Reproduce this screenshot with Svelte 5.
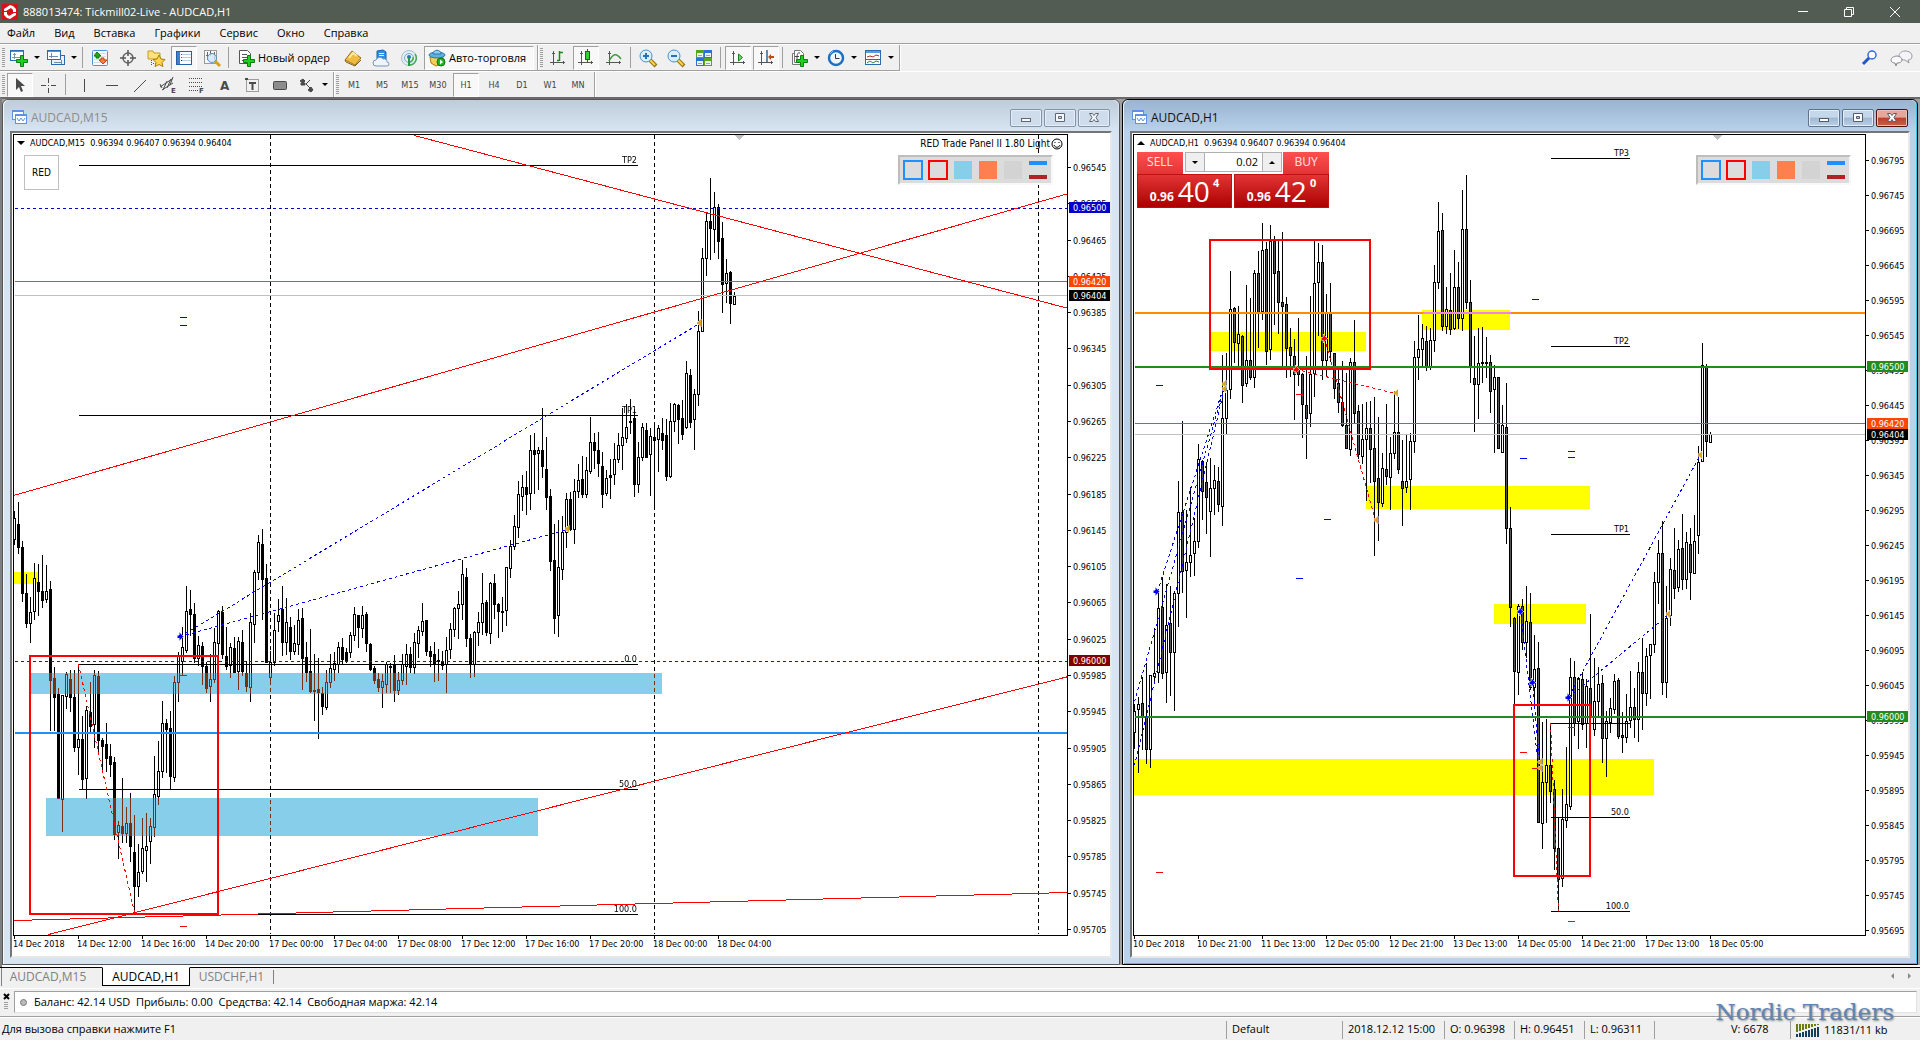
<script>
  const menu = ['Файл', 'Вид', 'Вставка', 'Графики', 'Сервис', 'Окно', 'Справка'];
  const periods = ['M1', 'M5', 'M15', 'M30', 'H1', 'H4', 'D1', 'W1', 'MN'];
  const tabs = ['AUDCAD,M15', 'AUDCAD,H1', 'USDCHF,H1'];
  const drawTools = ['vline', 'hline', 'trend', 'channel', 'fibo', 'text', 'label', 'rect'];

  let period = $state('H1');
  let tab = $state('AUDCAD,H1');
  let volume = $state('0.02');

  // candle: [high, body top, body bottom, low, bearish]
  const m15 = [
    [511,518,539,544,0],[502,524,547,553,1],[541,547,593,601,1],[574,593,623,627,1],[597,612,623,642,0],[563,578,611,619,0],
    [564,582,591,615,1],[555,591,600,607,1],[565,591,599,602,0],[581,589,680,730,1],[667,678,697,730,1],[688,694,798,798,1],
    [695,695,799,831,0],[672,674,696,708,0],[670,679,697,711,1],[670,697,747,751,1],[665,739,747,774,0],[716,739,779,789,1],
    [706,710,778,798,0],[682,712,726,732,1],[670,675,724,747,0],[671,676,740,754,1],[738,740,746,769,1],[723,744,758,771,1],
    [744,756,764,776,1],[757,762,834,839,1],[821,825,832,858,0],[778,826,833,842,1],[807,823,833,842,0],[793,823,846,861,1],
    [815,852,886,913,1],[844,872,886,896,0],[818,848,871,873,0],[813,846,850,881,0],[818,826,841,863,0],[756,794,827,836,0],
    [741,771,796,804,0],[701,723,771,777,0],[719,723,729,772,1],[711,728,776,789,1],[676,682,777,781,0],[652,656,682,701,0],
    [627,647,661,674,0],[586,611,650,652,0],[590,609,614,635,1],[603,614,658,662,1],[636,645,658,665,0],[642,646,666,684,1],
    [662,666,688,692,1],[654,679,686,701,0],[628,642,679,682,0],[610,611,643,654,0],[606,612,654,658,1],[627,656,666,669,1],
    [643,647,665,677,0],[637,648,672,672,1],[637,641,671,689,0],[630,642,671,675,1],[661,673,686,691,1],[613,622,687,701,0],
    [570,572,624,642,0],[535,542,572,579,0],[529,544,579,619,1],[564,578,662,662,1],[651,662,677,684,0],[613,630,662,665,0],
    [599,615,621,631,0],[586,609,642,655,1],[598,622,642,654,0],[617,627,651,659,1],[625,643,651,654,0],[609,620,644,654,0],
    [608,618,658,689,1],[642,657,672,681,1],[629,671,691,692,1],[654,690,691,720,1],[658,689,692,738,1],[687,693,706,714,1],
    [670,682,707,709,0],[654,668,682,687,0],[652,663,669,680,0],[642,647,664,672,0],[638,647,659,664,1],[648,652,660,662,1],
    [632,635,652,657,0],[607,614,635,640,0],[615,615,627,647,1],[606,615,628,637,0],[612,614,643,651,1],[643,644,669,670,1],
    [666,668,680,683,1],[673,679,687,691,1],[674,681,687,707,0],[662,664,684,692,0],[663,666,667,692,1],[655,664,690,701,1],
    [672,680,690,694,0],[654,664,680,684,0],[644,654,666,684,0],[647,654,667,672,1],[633,642,667,673,0],[626,630,643,657,0],
    [603,621,631,635,0],[620,620,651,655,1],[646,651,656,666,1],[642,654,664,681,1],[649,660,661,680,1],[651,661,665,669,1],
    [637,650,664,692,0],[623,629,649,658,0],[607,608,629,636,0],[591,604,608,638,0],[560,574,604,619,0],[568,577,638,646,1],
    [634,638,663,677,1],[631,632,664,676,0],[612,622,632,645,0],[573,603,622,634,0],[600,602,632,635,1],[582,583,633,643,0],
    [574,583,604,618,1],[603,604,611,637,1],[597,611,612,631,1],[567,567,610,625,0],[540,546,568,577,0],[515,526,546,549,0],
    [481,494,527,537,0],[475,487,496,510,0],[471,487,494,514,1],[435,450,493,509,0],[433,450,454,493,1],[447,450,453,489,0],
    [408,450,466,477,1],[437,469,497,509,1],[489,496,561,570,1],[524,560,618,633,1],[520,567,615,636,0],[516,532,569,579,0],
    [493,499,532,547,0],[492,499,529,530,1],[479,491,529,543,0],[464,480,491,497,0],[456,479,494,497,1],[457,470,494,497,0],
    [417,442,471,473,0],[433,442,450,468,1],[432,450,463,476,1],[452,466,494,507,1],[470,478,493,495,0],[459,475,477,498,1],
    [443,459,474,484,0],[433,445,459,462,0],[408,437,445,469,0],[404,427,438,442,0],[399,421,422,433,1],[409,418,484,496,1],
    [442,457,484,492,0],[423,427,457,460,0],[423,430,457,457,1],[428,436,454,495,0],[425,437,440,508,1],[425,428,439,471,0],
    [418,433,440,449,1],[419,435,476,480,1],[403,421,476,477,0],[403,404,421,431,0],[404,405,419,443,1],[400,418,434,439,1],
    [361,373,427,428,0],[369,375,422,427,1],[389,394,419,449,0],[311,331,394,405,0],[248,258,331,331,0],[213,221,258,275,0],
    [178,221,228,259,1],[192,207,229,252,0],[204,207,241,258,1],[222,238,284,312,1],[259,273,283,302,0],[271,272,303,323,1],
    [292,296,304,304,0]
  ];

  const h1 = [
    [704,711,732,748,0],[697,704,709,772,0],[677,703,717,749,1],[663,717,749,763,1],[675,675,749,767,0],[628,673,676,682,0],
    [593,608,672,682,0],[577,607,673,678,1],[584,625,672,702,0],[586,623,652,695,1],[591,593,652,710,0],[481,512,593,626,0],
    [421,512,571,592,1],[510,562,570,617,0],[487,555,562,576,0],[518,541,553,575,0],[444,459,541,547,0],[460,461,491,519,1],
    [462,482,497,533,1],[458,488,511,556,0],[465,480,488,514,0],[467,481,504,511,1],[355,418,506,525,0],[353,390,418,433,0],
    [271,309,389,398,0],[307,308,342,362,1],[306,334,343,366,0],[335,336,385,402,1],[285,360,383,386,0],[298,360,377,379,1],
    [270,273,377,387,0],[251,273,312,347,1],[223,250,311,319,0],[242,249,351,364,1],[225,241,349,359,0],[236,241,273,324,1],
    [240,271,302,333,1],[232,302,306,367,1],[297,304,348,377,1],[328,347,355,376,1],[339,356,374,419,1],[318,370,374,385,1],
    [373,374,404,437,1],[356,405,418,458,1],[296,374,413,426,0],[240,283,373,396,0],[243,262,282,335,0],[245,262,360,379,1],
    [294,312,360,376,0],[283,312,351,361,1],[353,353,388,398,1],[370,383,402,412,1],[361,402,425,426,1],[373,425,448,448,1],
    [358,362,449,455,0],[320,362,413,422,1],[405,411,454,458,1],[404,439,456,463,0],[402,428,439,500,0],[401,428,449,482,1],
    [397,448,481,555,1],[417,478,502,540,1],[453,468,503,506,0],[404,469,476,484,1],[437,453,477,509,0],[391,432,453,458,0],
    [397,432,469,473,1],[440,481,488,525,1],[435,481,487,492,0],[433,441,479,509,0],[341,357,441,452,0],[315,349,357,379,0],
    [324,338,349,367,0],[326,341,367,370,1],[328,340,367,369,0],[265,282,340,351,0],[202,231,282,288,0],[213,230,326,330,1],
    [287,309,326,333,0],[273,310,329,334,1],[250,287,328,329,0],[262,287,318,328,1],[190,229,318,330,0],[175,229,302,308,1],
    [280,302,367,382,1],[336,378,384,431,1],[328,363,384,418,0],[327,362,363,382,0],[337,362,363,377,1],[355,362,391,412,1],
    [365,377,389,452,0],[377,377,448,448,1],[405,425,452,452,0],[383,427,528,543,1],[507,528,607,626,1],[617,618,671,705,1],
    [604,606,672,694,0],[599,606,642,649,1],[586,621,642,657,0],[593,622,687,689,1],[635,669,687,703,0],[642,668,822,822,1],
    [722,782,823,848,0],[719,765,782,822,0],[723,765,791,802,1],[780,789,848,869,1],[817,848,879,911,1],[789,819,878,886,0],
    [747,804,820,827,0],[658,677,806,809,0],[661,677,723,735,1],[677,678,721,748,0],[672,679,724,729,1],[679,686,723,747,0],
    [614,688,717,720,1],[658,701,729,735,0],[667,684,701,717,0],[675,683,738,762,1],[711,721,738,776,0],[698,708,722,732,0],
    [674,681,709,713,0],[678,680,736,738,1],[712,735,737,752,1],[694,721,737,742,0],[671,707,720,727,0],[688,707,719,737,1],
    [662,672,719,741,0],[638,672,693,729,1],[648,656,693,705,0],[644,644,655,698,0],[572,582,644,652,0],[540,553,582,603,0],
    [521,553,682,694,1],[586,618,682,697,0],[558,569,615,625,0],[528,570,588,598,1],[540,549,587,591,0],[514,548,579,589,1],
    [532,542,579,588,0],[528,544,572,599,1],[515,541,573,573,0],[446,462,535,553,0],[343,365,461,461,0],[364,367,441,456,1],
    [432,434,442,442,0]
  ];

  const step = 4;

  const charts = [
    {
      name: 'AUDCAD,M15',
      ox: 14,
      active: false,
      bear: '#000',
      candles: m15,
      quote: '0.96394 0.96407 0.96394 0.96404',
      times: ['14 Dec 2018', '14 Dec 12:00', '14 Dec 16:00', '14 Dec 20:00', '17 Dec 00:00', '17 Dec 04:00', '17 Dec 08:00', '17 Dec 12:00', '17 Dec 16:00', '17 Dec 20:00', '18 Dec 00:00', '18 Dec 04:00'],
      first: 96545, last: 95705, tick: 40, y0: 167, y1: 929,
      badges: [['0.96500', 207, '#0000cd'], ['0.96420', 281, '#ff4500'], ['0.96404', 295, '#000'], ['0.96000', 660, '#800000']],
      zones: [[14, 572, 24, 12]],
      inverse: [[30, 673, 632, 21], [46, 798, 492, 38]],
      days: [270, 654, 1038],
      // [x1, y1, x2, y2, colour, width, dash]
      lines: [
        [14, 208, 1068, 208, '#0000cd', 1, '3 3'],
        [14, 281, 1068, 281, '#ff4500', 1],
        [14, 295, 1068, 295, '#c0c0c0', 1],
        [14, 661, 1068, 661, '#800000', 1, '3 3'],
        [14, 732.5, 1068, 732.5, '#1e90ff', 2],
        [414, 135, 1068, 308, 'red', 1],
        [13, 495, 1068, 193, 'red', 1],
        [48, 934, 1068, 676, 'red', 1],
        [13, 920, 1068, 892, 'red', 1],
        [180, 636, 699, 323, 'blue', 1, '3 3'],
        [180, 636, 567, 529, 'blue', 1, '3 3'],
        [78, 664, 134, 912, 'red', 1, '3 3']
      ],
      boxes: [[30, 656, 188, 258]],
      levels: [['TP2', 165, 78], ['TP1', 415, 78], ['0.0', 664, 78], ['50.0', 789, 78], ['100.0', 914, 229]],
      levelEnd: 637,
      marks: [[179, 317, 'blue'], [179, 325, 'blue'], [179, 675, 'red'], [179, 926, 'red']],
      arrows: [[180, 636, 'blue']],
      exits: [[699, 323], [567, 529]],
      shift: 739
    },
    {
      name: 'AUDCAD,H1',
      ox: 1134,
      active: true,
      bear: '#555',
      candles: h1,
      quote: '0.96394 0.96407 0.96394 0.96404',
      times: ['10 Dec 2018', '10 Dec 21:00', '11 Dec 13:00', '12 Dec 05:00', '12 Dec 21:00', '13 Dec 13:00', '14 Dec 05:00', '14 Dec 21:00', '17 Dec 13:00', '18 Dec 05:00'],
      first: 96795, last: 95695, tick: 50, y0: 160, y1: 930,
      badges: [['0.96500', 366, '#228b22'], ['0.96420', 423, '#ff4500'], ['0.96404', 434, '#000'], ['0.96000', 716, '#228b22']],
      zones: [[1211, 332, 155, 19], [1422, 310, 88, 20], [1366, 486, 224, 23], [1494, 604, 92, 20], [1134, 759, 520, 36]],
      inverse: [],
      days: [],
      lines: [
        [1134, 423, 1865, 423, '#ff4500', 1],
        [1134, 434, 1865, 434, '#c0c0c0', 1],
        [1134, 312.5, 1865, 312.5, '#ff8c00', 2],
        [1422, 312.5, 1510, 312.5, '#ee82ee', 2],
        [1134, 366.5, 1865, 366.5, '#228b22', 2],
        [1134, 716.5, 1865, 716.5, '#228b22', 2],
        [1134, 701, 1224, 386, 'blue', 1, '3 3'],
        [1134, 765, 1224, 388, 'blue', 1, '3 3'],
        [1157, 591, 1224, 384, 'blue', 1, '3 3'],
        [1520, 611, 1538, 766, 'blue', 1, '3 3'],
        [1532, 682, 1539, 760, 'blue', 1, '3 3'],
        [1568, 697, 1699, 456, 'blue', 1, '3 3'],
        [1568, 697, 1667, 615, 'blue', 1, '3 3'],
        [1324, 338, 1375, 520, 'red', 1, '3 3'],
        [1296, 369, 1395, 393, 'red', 1, '3 3'],
        [1550, 723, 1558, 911, 'red', 1, '3 3']
      ],
      boxes: [[1210, 240, 160, 129], [1514, 705, 76, 171]],
      levels: [['TP3', 158, 1550], ['TP2', 346, 1550], ['TP1', 534, 1550], ['', 723, 1550], ['50.0', 817, 1550], ['100.0', 911, 1550]],
      levelEnd: 1629,
      marks: [
        [1155, 385, 'blue'], [1323, 519, 'blue'], [1295, 578, 'blue'], [1531, 299, 'blue'], [1519, 458, 'blue'], [1567, 451, 'blue'], [1567, 457, 'blue'],
        [1295, 394, 'red'], [1155, 872, 'red'], [1519, 752, 'red'], [1531, 768, 'red'], [1567, 727, 'red'], [1567, 921, 'red']
      ],
      arrows: [[1156, 591, 'blue'], [1520, 611, 'blue'], [1532, 682, 'blue'], [1568, 697, 'blue'], [1324, 338, 'red'], [1296, 369, 'red']],
      exits: [[1224, 384], [1224, 389], [1376, 520], [1396, 393], [1540, 762], [1540, 768], [1668, 614], [1700, 455]],
      shift: 1717
    }
  ];

  function bodies(c) {
    return c.candles
      .map(([h, t, b, l], i) => {
        const x = c.ox + i * step;
        return `M${x} ${h}h1V${l + 1}h-1zM${x - 1} ${t}h3V${b + 1}h-3z`;
      })
      .join('');
  }

  function cores(c, bearish) {
    return c.candles
      .map(([, t, b, , f], i) => (f === bearish && b - t > 1 ? `M${c.ox + i * step} ${t + 1}h1V${b}h-1z` : ''))
      .join('');
  }

  function prices(c) {
    const n = (c.first - c.last) / c.tick;
    return Array.from({ length: n + 1 }, (_, i) => ({
      label: '0.' + (c.first - i * c.tick),
      y: Math.round(c.y0 + ((c.y1 - c.y0) * i) / n)
    }));
  }
</script>

{#snippet axes()}
  <path d="M4.500 2V16M1 13.500H16M3 4.500h3M14.500 12v3" stroke="#555" fill="none" />
{/snippet}

{#snippet plus()}
  <path d="M10.500 6.500h3v4h4v3h-4v4h-3v-4h-4v-3h4z" fill="#1fd01f" stroke="#0a7d14" />
{/snippet}

{#snippet icon(name)}
  <svg class="icon" viewBox="0 0 18 18" aria-hidden="true">
    {#if name === 'newchart'}
      <rect x="0.5" y="1.5" width="13" height="10" fill="#fff" stroke="#2a6ab0" />
      <path d="M1 2.500h12" stroke="#4f93d6" />
      <path d="M4.500 4v6M2 8.500h9M3 5.500h3" stroke="#7d93ab" />
      {@render plus()}
    {:else if name === 'profiles'}
      <rect x="4.500" y="6.500" width="13" height="9" fill="#e8f2fb" stroke="#2a6ab0" />
      <rect x="0.5" y="1.5" width="13" height="9" fill="#fff" stroke="#2a6ab0" />
      <path d="M1 2.500h12" stroke="#4f93d6" />
      <path d="M4.500 4v5M2 7.500h9M7 13.500h8M14.500 11v4" stroke="#6b8cb0" />
    {:else if name === 'market'}
      <rect x="1.500" y="1.500" width="15" height="15" rx="1" fill="#f4f9fe" stroke="#4b94d8" />
      <path d="M3 4.500h12M3 7.500h12M3 10.500h12M3 13.500h12" stroke="#d5dde6" />
      <path d="M6 3l4 4H8v2H5V7H3z" fill="#18a818" stroke="#0b7a0b" />
      <path d="M12 15l-4-4h2V9h3v2h3z" fill="#ff7d3c" stroke="#c9430c" />
    {:else if name === 'data'}
      <circle cx="9" cy="9" r="5" fill="none" stroke="#666" stroke-width="1.500" />
      <path d="M9 1v6M9 11v6M1 9h6M11 9h6" stroke="#555" stroke-width="1.500" />
    {:else if name === 'navigator'}
      <path d="M1 2h5l1 2h6v6H1z" fill="#ffe27a" stroke="#c99b1d" />
      <path d="M4.500 11v6M6 14.500h5" stroke="#555" stroke-dasharray="1 1" />
      <path d="M12 6l2 4 4 .5-3 3 1 4-4-2-4 2 1-4-3-3 4-.5z" fill="#ffd54a" stroke="#a87c12" />
    {:else if name === 'terminal'}
      <rect x="1.500" y="2.500" width="15" height="13" fill="#fff" stroke="#2360a5" />
      <path d="M2 3h3v12H2z" fill="#3d83cc" />
      <path d="M7 5.500h9M7 8.500h9M7 11.500h9" stroke="#b9cbdd" />
      <path d="M6 5.500h1M6 8.500h1" stroke="#c33" />
      <path d="M6 11.500h1" stroke="#222" />
    {:else if name === 'tester'}
      <rect x="1.500" y="1.500" width="12" height="13" fill="#f7f7f7" stroke="#999" />
      <path d="M4.500 3v8M7.500 2v5M11.500 3v8M3 6.500h2M10 5.500h2" stroke="#666" />
      <path d="M12 12l5 5" stroke="#d6a021" stroke-width="3" />
      <circle cx="9" cy="9" r="4.500" fill="#cfe7fa" fill-opacity=".8" stroke="#5990c4" />
    {:else if name === 'order'}
      <path d="M2.500 1.500h8l3 3v10h-11z" fill="#fff" stroke="#555" />
      <path d="M5 5.500h5M5 8.500h6M5 11.500h3" stroke="#555" />
      {@render plus()}
    {:else if name === 'editor'}
      <path d="M1 11L8 2l9 7-6 7z" fill="#eebc3e" stroke="#a1700d" />
      <path d="M1 11l1 2 9 4 6-6" fill="none" stroke="#8a5f0a" />
      <path d="M5 9l4-5 4 3" stroke="#ffeaa6" stroke-width="2" fill="none" />
    {:else if name === 'cloud'}
      <path d="M5 2l6-1 3 2v8H5z" fill="#2f8fe4" stroke="#1664ae" />
      <path d="M7 4.500h5M7 6.500h5" stroke="#d9efff" />
      <path d="M4 17a3 3 0 010-6 4 4 0 017-1 3 3 0 014 3 2 2 0 010 4z" fill="#eef4fb" stroke="#7a95b4" />
    {:else if name === 'signal'}
      <circle cx="9" cy="9" r="7.500" fill="#e3eff7" stroke="#a5bfd0" />
      <circle cx="9" cy="9" r="4.500" fill="none" stroke="#7ea9c6" />
      <path d="M9 16a7 7 0 006-11M9 13a4 4 0 004-5" stroke="#4aa856" stroke-width="1.500" fill="none" />
      <circle cx="9" cy="8" r="2" fill="#2a78c0" />
      <path d="M9 9v8" stroke="#2a9a35" stroke-width="2" />
    {:else if name === 'auto'}
      <path d="M2 8h13l-2 7-5 2-5-3z" fill="#f6cd55" stroke="#ab7d14" />
      <ellipse cx="9" cy="6" rx="8" ry="3" fill="#5fb1df" stroke="#2c78a8" />
      <path d="M5 5c0-5 8-5 8 0z" fill="#8ccdf0" stroke="#2c78a8" />
      <circle cx="13" cy="13" r="4" fill="#21b321" stroke="#0c7a0c" />
      <path d="M12 10.500v5l3-2.500z" fill="#fff" />
    {:else if name === 'bars'}
      {@render axes()}
      <path d="M10.500 2v10M11 3.500h3M8 11.500h2" stroke="#1a8a1a" stroke-width="1.500" />
    {:else if name === 'candles'}
      {@render axes()}
      <path d="M10.500 0v13" stroke="#0b720b" />
      <rect x="8.500" y="2.500" width="4" height="8" fill="#2fd02f" stroke="#0b720b" />
    {:else if name === 'linechart'}
      {@render axes()}
      <path d="M4 12C8 5 11 3 16 10" stroke="#3c9a3c" fill="none" stroke-width="1.500" />
    {:else if name === 'zoomin' || name === 'zoomout'}
      <path d="M11 11l6 6" stroke="#9a7410" stroke-width="4" />
      <path d="M11 11l5 5" stroke="#ffd34a" stroke-width="2" />
      <circle cx="7" cy="7" r="6" fill="#d9effc" stroke="#4a8fca" />
      <path d="M4 7h6" stroke="#2673b5" stroke-width="2" />
      {#if name === 'zoomin'}<path d="M7 4v6" stroke="#2673b5" stroke-width="2" />{/if}
    {:else if name === 'tile'}
      <path d="M1 1h8v8H1zM9 9h8v8H9z" fill="#56a51e" />
      <path d="M9 1h8v8H9zM1 9h8v8H1z" fill="#2d6fd2" />
      <path d="M2 4h6v4H2zM10 4h6v4h-6zM2 12h6v4H2zM10 12h6v4h-6z" fill="#eaf4fb" />
      <path d="M3 6.500h4M11 6.500h4M3 14.500h4M11 14.500h4" stroke="#8ea4b8" />
    {:else if name === 'scroll'}
      {@render axes()}
      <path d="M9.500 5v7l4-3.500z" fill="#6fd86f" stroke="#128212" />
    {:else if name === 'shift'}
      {@render axes()}
      <path d="M10 1v12" stroke="#27699f" stroke-width="1.500" />
      <path d="M11 8l3-3v2h3v2h-3v2z" fill="#c8461b" />
    {:else if name === 'indicators'}
      <path d="M2.500 4.500h9v11h-9z" fill="#fff" stroke="#777" />
      <path d="M4.500 1.500h6l3 3v9h-9z" fill="#fff" stroke="#777" />
      <path d="M10 4c-3-1-3 2-3 8M5 7.500h4" stroke="#444" fill="none" />
      {@render plus()}
    {:else if name === 'clock'}
      <circle cx="9" cy="9" r="7" fill="#eef5fc" stroke="#1f6fc4" stroke-width="2.500" />
      <path d="M8.500 5v4.500h4" stroke="#333" fill="none" />
      <path d="M3 5l3-3" stroke="#7cc0f5" />
    {:else if name === 'template'}
      <rect x="1.500" y="1.500" width="15" height="14" fill="#fff" stroke="#2a6ab0" />
      <path d="M2 3h14" stroke="#5ba0de" stroke-width="2" />
      <path d="M3 8l3-1 3 1 3-2 3 1" stroke="#a5362a" fill="none" />
      <path d="M2 10.500h14" stroke="#2a6ab0" />
      <path d="M3 14l3-2 3 2 3-2 3 1" stroke="#2f8c2f" fill="none" />
    {:else if name === 'cursor'}
      <path d="M5 2v12l3-3 2 5 2-1-2-5h4z" fill="#4a4a4a" />
    {:else if name === 'cross'}
      <path d="M9.500 2v5M9.500 12v5M2 9.500h5M12 9.500h5M9 9.500h1" stroke="#4a4a4a" />
    {:else if name === 'vline'}
      <path d="M9.500 3v13" stroke="#4a4a4a" />
    {:else if name === 'hline'}
      <path d="M3 9.500h12" stroke="#4a4a4a" />
    {:else if name === 'trend'}
      <path d="M3 16L15 4" stroke="#4a4a4a" />
    {:else if name === 'channel'}
      <path d="M1 11L13 3M3 14L14 7M4 14L8 5M8 12l4-9M11 9l3-8M1 8l2 4" stroke="#4a4a4a" />
      <text x="12" y="17">E</text>
    {:else if name === 'fibo'}
      <path d="M2 2.500h14M2 6.500h14M2 10.500h14M2 14.500h9" stroke="#4a4a4a" stroke-dasharray="1 1" />
      <text x="12" y="17">F</text>
    {:else if name === 'text'}
      <text class="big" x="5" y="14">A</text>
    {:else if name === 'label'}
      <rect x="3.500" y="3.500" width="12" height="12" fill="none" stroke="#4a4a4a" stroke-dasharray="1 1" />
      <path d="M2 2h3v2H2zM6 6h7v2h-2.500v6h-2V8H6z" fill="#4a4a4a" />
    {:else if name === 'rect'}
      <rect x="2.500" y="5.500" width="13" height="8" rx="1" fill="#8c8c8c" stroke="#4a4a4a" />
    {:else if name === 'arrows'}
      <path d="M5 3l2 2-2 2-3-2zM13 11l2 3-2 2-3-2zM3 7h4v2H3zM12 4l-4 4M8 8l4 4" fill="#4a4a4a" stroke="#4a4a4a" />
    {:else if name === 'chart'}
      <rect x="1.500" y="2.500" width="11" height="9" fill="#fff" stroke="#5b92e5" />
      <path d="M2 3.500h10M4 7.500h2" stroke="#5b92e5" />
      <rect x="4.500" y="6.500" width="11" height="9" fill="#fff" stroke="#5b92e5" />
      <path d="M5 7.500h10M6 10l2 3 2-3 2 3 2-3" fill="none" stroke="#5b92e5" />
    {:else if name === 'search'}
      <circle cx="11" cy="6" r="4" fill="#fff" stroke="#2e6be0" stroke-width="1.500" />
      <path d="M8 9l-6 6" stroke="#2456c4" stroke-width="3" />
    {/if}
  </svg>
{/snippet}

{#snippet tool(name, label, pressed = false)}
  <button class="tool" class:pressed aria-label={label}>{@render icon(name)}</button>
{/snippet}

{#snippet drop(name, label)}
  <button class="tool drop" aria-label={label}>{@render icon(name)}<i class="caret"></i></button>
{/snippet}

<div class="app">
  <header class="titlebar">
    <svg class="logo" viewBox="0 0 16 16" aria-hidden="true">
      <rect width="16" height="16" fill="#d6111a" />
      <path d="M8 1l3 1 3 3v3h-3V6L9 4 4 7H2V5zM8 15l-3-1-3-3V8h3v2l2 2 5-3h2v2z" fill="#fff" />
    </svg>
    <span class="caption">888013474: Tickmill02-Live - AUDCAD,H1</span>
    <button class="sys" aria-label="Свернуть"><svg viewBox="0 0 12 12"><path d="M1 5.500h10" /></svg></button>
    <button class="sys" aria-label="Восстановить"><svg viewBox="0 0 12 12"><path d="M1.500 3.500h7v7h-7zM3.500 3V1.500h7v7H9" /></svg></button>
    <button class="sys" aria-label="Закрыть"><svg viewBox="0 0 12 12"><path d="M1 1l10 10M11 1L1 11" /></svg></button>
  </header>

  <nav class="menu">
    {#each menu as m}
      <a href="#menu">{m}</a>
    {/each}
  </nav>

  <div class="bar">
    <div class="group">
      <i class="grip"></i>
      {@render drop('newchart', 'Новый график')}
      {@render drop('profiles', 'Профили')}
      <i class="sep"></i>
      {@render tool('market', 'Обзор рынка')}
      {@render tool('data', 'Окно данных')}
      {@render tool('navigator', 'Навигатор')}
      {@render tool('terminal', 'Терминал', true)}
      {@render tool('tester', 'Тестер стратегий')}
      <i class="sep"></i>
      <button class="tool wide">{@render icon('order')}Новый ордер</button>
      {@render tool('editor', 'MetaEditor')}
      {@render tool('cloud', 'Облако')}
      {@render tool('signal', 'Сигналы')}
      <button class="tool wide pressed">{@render icon('auto')}Авто-торговля</button>
    </div>
    <div class="group">
      <i class="grip"></i>
      {@render tool('bars', 'Бары')}
      {@render tool('candles', 'Японские свечи', true)}
      {@render tool('linechart', 'Линия')}
      <i class="sep"></i>
      {@render tool('zoomin', 'Увеличить')}
      {@render tool('zoomout', 'Уменьшить')}
      {@render tool('tile', 'Окна мозаикой')}
      <i class="sep"></i>
      {@render tool('scroll', 'Автопрокрутка', true)}
      {@render tool('shift', 'Сдвиг графика', true)}
      <i class="sep"></i>
      {@render drop('indicators', 'Индикаторы')}
      {@render drop('clock', 'Периоды')}
      {@render drop('template', 'Шаблоны')}
    </div>
    <div class="right">
      {@render tool('search', 'Поиск')}
      <button class="tool chat" aria-label="Чат">
        <svg viewBox="0 0 24 18" aria-hidden="true">
          <path d="M15 2c4 0 7 2 7 5s-2 4-4 4l1 3-4-3c-4 0-6-2-6-4s2-5 6-5z" fill="#f4f4fa" stroke="#999" />
          <path d="M7 7c3 0 5 2 5 4s-2 3-5 3l-1 3-1-3c-2 0-4-1-4-3s3-4 6-4z" fill="#fafaff" stroke="#888" />
        </svg>
      </button>
    </div>
  </div>

  <div class="bar second">
    <div class="group">
      <i class="grip"></i>
      {@render tool('cursor', 'Курсор', true)}
      {@render tool('cross', 'Перекрестие')}
      <i class="sep"></i>
      {#each drawTools as t}
        {@render tool(t, t)}
      {/each}
      {@render drop('arrows', 'Стрелки')}
    </div>
    <div class="group">
      <i class="grip"></i>
      {#each periods as p}
        <button class="tool period" class:pressed={p === period} onclick={() => (period = p)}>{p}</button>
      {/each}
    </div>
  </div>

  <main class="mdi">
    {#each charts as c}
      <section class="window" class:active={c.active} class:minor={!c.active}>
        <header>
          {@render icon('chart')}
          <span>{c.name}</span>
          <button class="ctl" aria-label="Свернуть"><svg viewBox="0 0 14 12"><rect x="2.500" y="6.500" width="9" height="3" /></svg></button>
          <button class="ctl" aria-label="Развернуть"><svg viewBox="0 0 14 12"><path fill-rule="evenodd" d="M2.500 1.500h9v8h-9zM5.500 4.500v2h3v-2z" /></svg></button>
          <button class="ctl close" aria-label="Закрыть"><svg viewBox="0 0 14 12"><path d="M2.500 1.500h3L7 3.500l1.500-2h3L9 5.500l2.500 4h-3L7 7.500l-1.500 2h-3L5 5.500z" /></svg></button>
        </header>

        <div class="client">
          <div class="plot">
            <svg class="canvas" shape-rendering="crispEdges">
              <g transform="translate({-c.ox} -135)">
                {#each c.zones as [x, y, w, h]}
                  <rect {x} {y} width={w} height={h} fill="#ff0" />
                {/each}
                {#each c.days as x}
                  <path d="M{x + 0.5} 135V934" stroke="#000" stroke-dasharray="4 3" />
                {/each}
                <path d={bodies(c)} />
                <path d={cores(c, 0)} fill="#fff" />
                <path d={cores(c, 1)} fill={c.bear} />
                <!-- zones laid over the candles invert what is under them -->
                {#each c.inverse as [x, y, w, h]}
                  <rect class="inverse" {x} {y} width={w} height={h} />
                {/each}
                <g transform="translate(.5 .5)">
                  {#each c.levels as [, y, x]}
                    <path d="M{x} {y}H{c.levelEnd}" stroke="#000" />
                  {/each}
                  {#each c.lines as [x1, y1, x2, y2, color, width, dash]}
                    <line {x1} {y1} {x2} {y2} stroke={color} stroke-width={width} stroke-dasharray={dash} />
                  {/each}
                  {#each c.marks as [x, y, color]}
                    <path d="M{x} {y}h7" stroke={color} />
                  {/each}
                </g>
                {#each c.boxes as [x, y, w, h]}
                  <rect {x} {y} width={w} height={h} fill="none" stroke="red" stroke-width="2" />
                {/each}
                {#each c.arrows as [x, y, color]}
                  <path d="M{x - 3} {y - 1}h2v-3l5 4.500-5 4.500v-3h-2z" fill={color} stroke="#fff" stroke-width=".5" />
                {/each}
                {#each c.exits as [x, y]}
                  <path d="M{x + 2} {y - 4}v8l-5-4z" fill="#daa520" stroke="#fff" stroke-width=".5" />
                {/each}
                {#each c.levels as [label, y]}
                  <text x={c.levelEnd} y={y - 2} text-anchor="end">{label}</text>
                {/each}
                <path d="M{c.shift - 5} 135h11l-5.500 5z" fill="#c0c0c0" />
              </g>
            </svg>

            <p class="info"><i class:up={c.active}></i>{c.name}  {c.quote}</p>

            {#if c.active}
              <div class="oneclick">
                <button class="deal sell" aria-label="SELL 0.96404">
                  <span class="side">SELL</span>
                  <span class="price"><b>0.96</b><em>40</em><sup>4</sup></span>
                </button>
                <button class="deal buy" aria-label="BUY 0.96420">
                  <span class="side">BUY</span>
                  <span class="price"><b>0.96</b><em>42</em><sup>0</sup></span>
                </button>
                <div class="volume">
                  <button aria-label="Меньше"><i class="caret"></i></button>
                  <input aria-label="Объем" bind:value={volume} />
                  <button aria-label="Больше"><i class="caret flip"></i></button>
                </div>
              </div>
            {:else}
              <button class="red">RED</button>
              <p class="expert">RED Trade Panel II 1.80 Light<svg viewBox="0 0 12 12"><circle cx="6" cy="6" r="5" /><path d="M4 4v1M8 4v1M3 7c1 3 5 3 6 0" /></svg></p>
            {/if}

            <div class="palette">
              <button class="frame blue" aria-label="Синяя рамка"></button>
              <button class="frame redframe" aria-label="Красная рамка"></button>
              <button class="sky" aria-label="Голубая зона"></button>
              <button class="coral" aria-label="Коралловая зона"></button>
              <button class="grey" aria-label="Серая зона"></button>
              <button class="rules" aria-label="Линии"></button>
            </div>
          </div>

          <svg class="prices">
            <g transform="translate(0 -133)">
              {#each prices(c) as p}
                <path d="M0 {p.y + 0.5}h3" stroke="#000" />
                <text x="5" y={p.y + 4}>{p.label}</text>
              {/each}
              {#each c.badges as [label, y, color]}
                <rect x="1" y={y - 5} width="41" height="11" fill={color} />
                <text class="light" x="5" y={y + 4}>{label}</text>
              {/each}
            </g>
          </svg>

          <svg class="times">
            {#each c.times as t, i}
              <path d="M{2.5 + i * 64} 0v3" stroke="#000" />
              <text x={1 + i * 64} y="11">{t}</text>
            {/each}
          </svg>
        </div>
      </section>
    {/each}
  </main>

  <div class="tabs">
    {#each tabs as t}
      <button class:current={t === tab} onclick={() => (tab = t)}>{t}</button>
    {/each}
    <i class="tabend"></i>
    <span class="nav"><i></i><i class="next"></i></span>
  </div>

  <div class="account">
    <div class="side-grip">
      <button aria-label="Закрыть"><svg viewBox="0 0 7 7"><path d="M1 1l5 5M6 1L1 6" /></svg></button>
      <i></i>
    </div>
    <p><i class="dot"></i>Баланс: 42.14 USD  Прибыль: 0.00  Средства: 42.14  Свободная маржа: 42.14</p>
  </div>

  <footer class="status">
    <span class="hint">Для вызова справки нажмите F1</span>
    <span class="profile">Default</span>
    <span class="date">2018.12.12 15:00</span>
    <span class="ohl">O: 0.96398</span>
    <span class="ohl">H: 0.96451</span>
    <span class="ohl">L: 0.96311</span>
    <span class="vol">V: 6678</span>
    <span class="net">
      <svg viewBox="0 0 24 13" shape-rendering="crispEdges" aria-hidden="true">
        {#each [0, 1, 2, 3, 4, 5, 6, 7] as n}
          <rect x={n * 3} y="0" width="2" height={8 - n} fill="#6b7d12" />
          <rect x={n * 3} y={10 - n} width="2" height={3 + n} fill="#123f5c" />
        {/each}
      </svg>
      11831/11 kb
    </span>
    <span class="watermark">Nordic Traders</span>
  </footer>
</div>

<style>
  :global(body) {
    margin: 0;
    background: #f0f0f0;
  }
  .app {
    display: flex;
    flex-direction: column;
    height: 100vh;
    overflow: hidden;
    background: #f0f0f0;
    color: #000;
    font: 11px/16px "Open Sans", "Noto Sans", sans-serif;
  }
  .app :is(button, input) {
    margin: 0;
    padding: 0;
    border: 0;
    border-radius: 0;
    background: none;
    color: inherit;
    font: inherit;
  }
  .app p {
    margin: 0;
  }
  .app i {
    font-style: normal;
  }

  /* title and menu */
  .titlebar {
    display: flex;
    flex: none;
    align-items: center;
    box-sizing: border-box;
    height: 23px;
    padding: 0 2px;
    background: #525c52;
    color: #fff;
  }
  .logo {
    width: 16px;
    height: 16px;
  }
  .caption {
    flex: 1;
    margin-left: 5px;
  }
  .titlebar .sys {
    width: 46px;
    height: 20px;
  }
  .sys svg {
    display: block;
    width: 12px;
    height: 12px;
    margin: 0 auto;
    fill: none;
    stroke: #fff;
  }
  .menu {
    display: flex;
    flex: none;
    gap: 19px;
    height: 20px;
    padding-left: 7px;
    border-bottom: 1px solid #a0a0a0;
    line-height: 20px;
  }
  .menu a {
    color: #000;
    text-decoration: none;
  }

  /* toolbars */
  .bar {
    display: flex;
    flex: none;
    height: 27px;
    box-sizing: border-box;
    border-top: 1px solid #fff;
  }
  .second {
    height: 26px;
  }
  .group {
    display: flex;
    align-items: center;
    padding-right: 2px;
    border-right: 1px solid #a0a0a0;
    border-bottom: 1px solid #a0a0a0;
    box-shadow: 1px 0 #fff;
  }
  .second .group {
    border-bottom: 0;
  }
  .right {
    display: flex;
    align-items: center;
    margin-left: auto;
  }
  .grip {
    width: 3px;
    height: 20px;
    margin: 0 1px 0 2px;
    background: repeating-linear-gradient(#a0a0a0 0 1px, #f0f0f0 1px 2px);
  }
  .sep {
    width: 1px;
    height: 21px;
    margin: 0 3px 0 2px;
    background: #a0a0a0;
  }
  .second .sep {
    margin: 0 4px 0 3px;
  }
  .app .tool {
    display: flex;
    flex: none;
    align-items: center;
    justify-content: center;
    box-sizing: border-box;
    width: 26px;
    height: 24px;
    margin: 0 1px;
    border: 1px solid transparent;
  }
  .app .pressed {
    border-color: #a0a0a0 #fff #fff #a0a0a0;
    background: #f8f8f8;
  }
  .app .drop {
    gap: 6px;
    width: 35px;
  }
  .app .wide {
    gap: 3px;
    width: auto;
    padding: 0 7px 0 3px;
  }
  .app .period {
    color: #444;
    font: 9px "DejaVu Sans Condensed", "DejaVu Sans", sans-serif;
  }
  .icon {
    flex: none;
    width: 18px;
    height: 18px;
    overflow: visible;
    fill: #4a4a4a;
    font: bold 7px "DejaVu Sans", sans-serif;
  }
  .icon .big {
    font-size: 12px;
  }
  .caret {
    flex: none;
    border: 3px solid transparent;
    border-top: 3px solid #000;
    border-bottom: 0;
  }
  .flip {
    transform: rotate(180deg);
  }
  .app .chat {
    width: 34px;
  }
  .chat svg {
    width: 24px;
    height: 18px;
  }

  /* chart windows */
  .mdi {
    display: flex;
    flex: 1;
    gap: 2px;
    min-height: 0;
    padding: 0 2px 2px 0;
    border-top: 2px solid #696969;
    border-left: 2px solid #808080;
    background: #a0a0a0;
    box-shadow: inset 0 -2px #fff;
  }
  .window {
    display: flex;
    flex: 780 1 0;
    flex-direction: column;
    min-width: 0;
    box-sizing: border-box;
    padding: 0 7px 6px;
    border: 1px solid #000;
    border-radius: 6px 6px 0 0;
    background: #b9d1ea;
    box-shadow: inset 1px 1px #e8f2fb, inset -1px -1px #35c3e6;
  }
  .minor {
    flex-grow: 1102;
    border-color: #555;
    background: #d7e4f2;
    box-shadow: inset 1px 1px #f5f9fc;
  }
  .window > header {
    display: flex;
    flex: none;
    align-items: center;
    height: 31px;
    gap: 2px;
    margin: 0 -6px;
    padding: 0 8px 0 7px;
    background: linear-gradient(#99b4d1, #b9d1ea);
    border-radius: 6px 6px 0 0;
    color: #111;
    font-size: 12px;
  }
  .minor > header {
    background: linear-gradient(#bfcddb, #d7e4f2);
    color: #8c8c8c;
  }
  .window > header span {
    flex: 1;
    padding-top: 4px;
  }
  .window > header .icon {
    padding-top: 3px;
  }
  .window .ctl {
    width: 32px;
    height: 18px;
    margin-top: 4px;
    border: 1px solid #5b7290;
    border-radius: 2px;
    background: linear-gradient(#c5d7ea 45%, #9fb8d2 50%, #b9d0e8);
    box-shadow: inset 0 0 0 1px #e3eef8;
  }
  .minor .ctl {
    border-color: #8494a6;
    background: #cfdceb;
  }
  .ctl svg {
    display: block;
    width: 14px;
    height: 12px;
    margin: 0 auto;
    fill: #fff;
    stroke: #555a68;
  }
  .active .close {
    border-color: #57100c;
    background: linear-gradient(#e4a79c 45%, #b9402c 50%, #c9604a);
    box-shadow: inset 0 0 0 1px #ecc0b8;
  }
  .minor .ctl svg {
    fill: #f4f8fc;
    stroke: #5f6772;
  }
  .client {
    display: grid;
    flex: 1;
    grid-template: minmax(0, 1fr) 20px / minmax(0, 1fr) 42px;
    min-height: 0;
    border: 2px solid #757575;
    border-right-color: #e8e8e8;
    border-bottom-color: #e8e8e8;
    background: #fff;
    font: 9px/12px "DejaVu Sans Condensed", "DejaVu Sans", sans-serif;
  }
  .plot {
    position: relative;
    margin: 1px 0 0 1px;
    border: 1px solid #000;
    overflow: hidden;
  }
  .canvas {
    display: block;
    width: 100%;
    height: 100%;
    isolation: isolate;
    background: #fff;
  }
  .inverse {
    fill: #783114;
    mix-blend-mode: difference;
  }
  .prices,
  .times {
    display: block;
    width: 100%;
    height: 100%;
  }
  .times {
    grid-column: 1 / 3;
    overflow: hidden;
  }
  .light {
    fill: #fff;
  }
  .info {
    position: absolute;
    top: 2px;
    left: 3px;
    display: flex;
    align-items: center;
    white-space: pre;
  }
  .info i {
    margin-right: 5px;
    border: 4px solid transparent;
    border-top-color: #000;
    border-bottom: 0;
  }
  .info .up {
    transform: rotate(180deg);
  }
  .window .red {
    position: absolute;
    top: 20px;
    left: 10px;
    width: 35px;
    height: 35px;
    border: 1px solid #c0c0c0;
    background: #fff;
    font-size: 10px;
  }
  .expert {
    position: absolute;
    top: 3px;
    right: 4px;
    display: flex;
    align-items: center;
    gap: 1px;
    font-size: 10px;
  }
  .expert svg {
    width: 12px;
    height: 12px;
    fill: none;
    stroke: #000;
  }
  .palette {
    position: absolute;
    top: 20px;
    right: 14px;
    display: flex;
    gap: 7px;
    width: 155px;
    height: 30px;
    box-sizing: border-box;
    padding: 4px;
    border: 2px solid #bdbdbd;
    border-right-color: #f8f8f8;
    border-bottom-color: #f8f8f8;
    background: #dcdcdc;
  }
  .palette button {
    flex: none;
    width: 18px;
    height: 18px;
  }
  .palette .frame {
    width: 20px;
    height: 20px;
    margin: -1px;
    border: 2px solid #1e90ff;
  }
  .palette .redframe {
    border-color: red;
  }
  .palette .sky {
    background: #87ceeb;
  }
  .palette .coral {
    background: #ff7f50;
  }
  .palette .grey {
    background: #d3d3d3;
  }
  .palette .rules {
    border-top: 4px solid #1e90ff;
    border-bottom: 4px solid #b22222;
  }

  /* one click trading */
  .oneclick {
    position: absolute;
    top: 17px;
    left: 3px;
    display: flex;
    gap: 2px;
    color: #fff;
    font-family: "Open Sans", sans-serif;
  }
  .oneclick .deal {
    display: flex;
    flex-direction: column;
    width: 95px;
    height: 56px;
  }
  .oneclick .buy {
    align-items: flex-end;
  }
  .side {
    width: 46px;
    height: 22px;
    background: linear-gradient(#ff5050, #e23434);
    color: #ffe4e4;
    font-size: 12px;
    line-height: 20px;
  }
  .price {
    display: flex;
    justify-content: center;
    box-sizing: border-box;
    width: 95px;
    height: 34px;
    border: 1px solid #c01010;
    background: linear-gradient(#e23434, #ac0000);
  }
  .price b {
    align-self: flex-end;
    font-size: 12px;
    line-height: 20px;
  }
  .price em {
    margin: 0 3px 0 4px;
    font: 28px/32px "Open Sans", sans-serif;
  }
  .price sup {
    font: bold 11px/16px "Open Sans", sans-serif;
  }
  .volume {
    position: absolute;
    top: 0;
    left: 48px;
    display: flex;
    box-sizing: border-box;
    width: 97px;
    height: 20px;
    border: 1px solid #b0b0b0;
    background: #fff;
    color: #000;
  }
  .volume button {
    display: flex;
    flex: none;
    align-items: center;
    justify-content: center;
    width: 18px;
    background: #efefef;
  }
  .oneclick .volume input {
    flex: 1;
    min-width: 0;
    padding-right: 4px;
    border-right: 1px solid #b0b0b0;
    border-left: 1px solid #b0b0b0;
    font-size: 11px;
    text-align: right;
  }

  /* chart tabs, account line, status bar */
  .tabs {
    display: flex;
    flex: none;
    align-items: flex-start;
    height: 20px;
    padding-left: 1px;
    border-top: 1px solid #000;
    border-bottom: 1px solid #fff;
    font-size: 12px;
  }
  .tabs button {
    box-sizing: border-box;
    width: 101px;
    height: 18px;
    color: #808080;
    line-height: 16px;
  }
  .tabs button:first-child {
    padding-right: 8px;
    border-left: 1px solid #808080;
  }
  .tabs .current {
    width: 88px;
    height: 19px;
    margin-top: -1px;
    border: 1px solid #000;
    border-top-color: #fff;
    background: #fff;
    color: #000;
  }
  .tabs .current + button {
    width: 83px;
  }
  .tabend {
    width: 1px;
    height: 14px;
    margin-top: 2px;
    background: #808080;
  }
  .nav {
    display: flex;
    gap: 14px;
    margin: 5px 9px 0 auto;
  }
  .nav i {
    border: 3px solid transparent;
    border-right-color: #888;
    border-left: 0;
  }
  .nav .next {
    transform: rotate(180deg);
  }
  .account {
    display: flex;
    flex: none;
    height: 27px;
    padding-top: 2px;
    box-sizing: border-box;
  }
  .side-grip {
    width: 14px;
    padding: 2px 3px 0;
    box-sizing: border-box;
  }
  .side-grip button,
  .side-grip svg {
    display: block;
    width: 7px;
    height: 7px;
    stroke: #000;
    stroke-width: 2;
  }
  .side-grip i {
    display: block;
    width: 4px;
    height: 8px;
    margin: 2px 1px;
    background: repeating-linear-gradient(#a0a0a0 0 1px, #f0f0f0 1px 2px);
  }
  .account p {
    display: flex;
    flex: 1;
    align-items: center;
    height: 20px;
    margin-right: 3px;
    border: 1px solid #a0a0a0;
    border-right-color: #e3e3e3;
    border-bottom-color: #e3e3e3;
    background: #fff;
    white-space: pre;
  }
  .dot {
    width: 5px;
    height: 5px;
    margin: 0 7px 0 5px;
    border: 1px solid #777;
    border-radius: 50%;
    background: #bbb;
  }
  .status {
    position: relative;
    display: flex;
    flex: none;
    align-items: center;
    height: 24px;
    box-sizing: border-box;
    border-top: 1px solid #a0a0a0;
    box-shadow: inset 0 1px #fff;
    white-space: nowrap;
  }
  .status > span:not(.watermark) {
    box-sizing: border-box;
    height: 18px;
    margin-top: 3px;
    padding-left: 5px;
    border-left: 1px solid #a0a0a0;
  }
  .status > .hint:not(.watermark) {
    flex: 1;
    padding-left: 2px;
    border: 0;
  }
  .profile {
    width: 116px;
  }
  .date {
    width: 102px;
  }
  .ohl {
    width: 70px;
  }
  .status > .vol:not(.watermark) {
    width: 136px;
    padding-left: 76px;
  }
  .net {
    display: flex;
    align-items: center;
    gap: 4px;
    width: 130px;
  }
  .net svg {
    width: 24px;
    height: 13px;
  }
  .watermark {
    position: absolute;
    right: 26px;
    bottom: 16px;
    color: #5f84b5;
    font: 23px/24px "DejaVu Serif", serif;
    text-shadow: 1px 1px 2px #8a8a8a;
  }
</style>
